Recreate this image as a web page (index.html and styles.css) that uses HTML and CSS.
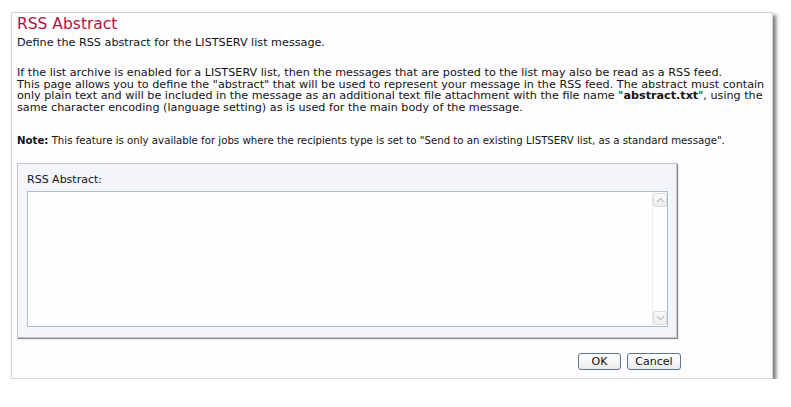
FILE: index.html
```html
<!DOCTYPE html>
<html>
<head>
<meta charset="utf-8">
<link rel="stylesheet" href="styles.css">
</head>
<body>
<div class="card">
  <h1 class="title">RSS Abstract</h1>
  <p class="intro">Define the RSS abstract for the LISTSERV list message.</p>
  <p class="para">If the list archive is enabled for a LISTSERV list, then the messages that are posted to the list may also be read as a RSS feed.<br>This page allows you to define the "abstract" that will be used to represent your message in the RSS feed. The abstract must contain<br>only plain text and will be included in the message as an additional text file attachment with the file name "<b>abstract.txt</b>", using the<br>same character encoding (language setting) as is used for the main body of the message.</p>
  <p class="note"><b>Note:</b> This feature is only available for jobs where the recipients type is set to "Send to an existing LISTSERV list, as a standard message".</p>
  <div class="fieldset">
    <label class="label" for="abs">RSS Abstract:</label>
    <div class="textwrap">
      <textarea id="abs" class="textarea"></textarea>
      <div class="scrollbar">
        <div class="arrow">
          <svg width="9" height="6" viewBox="0 0 9 6"><path d="M1 5 L4.5 1.5 L8 5" fill="none" stroke="#c4c4c4" stroke-width="1.4"/></svg>
        </div>
        <div class="arrow">
          <svg width="9" height="6" viewBox="0 0 9 6"><path d="M1 1 L4.5 4.5 L8 1" fill="none" stroke="#c4c4c4" stroke-width="1.4"/></svg>
        </div>
      </div>
    </div>
  </div>
  <div class="actions">
    <button class="btn btn-ok">OK</button>
    <button class="btn btn-cancel">Cancel</button>
  </div>
</div>
</body>
</html>
```
FILE: styles.css
```css
html, body {
  margin: 0;
  padding: 0;
  background: #ffffff;
}
body {
  font-family: "DejaVu Sans", Verdana, sans-serif;
  font-size: 11.2px;
  line-height: 11.7px;
  color: #141414;
  padding: 12px 0 0 11px;
}
.card {
  box-sizing: border-box;
  width: 762px;
  height: 367px;
  background: #fdfcff;
  border: 1px solid #d6d6d8;
  box-shadow: 3px 3px 4px rgba(0, 0, 0, 0.55);
  padding: 2px 4px 0 5px;
}
.title {
  margin: 0;
  font-size: 15.5px;
  line-height: 18px;
  font-weight: normal;
  color: #b0143c;
}
.intro {
  margin: 4px 0 0 0;
  white-space: nowrap;
}
.para {
  margin: 18.3px 0 0 0;
  white-space: nowrap;
}
.note {
  margin: 21px 0 0 0;
  white-space: nowrap;
  font-size: 10.2px;
}
.fieldset {
  box-sizing: border-box;
  width: 660px;
  height: 175px;
  margin-top: 16px;
  background: #f4f4fb;
  border: 1px solid #c4c4c8;
  box-shadow: 1px 1px 1px rgba(0, 0, 0, 0.45);
  padding: 10.5px 8px 0 9px;
  display: flex;
  flex-direction: column;
}
.label {
  display: block;
  height: 11.7px;
  font-size: 11px;
}
.textwrap {
  margin-top: 5px;
  box-sizing: border-box;
  height: 136px;
  border: 1px solid #a9bcd3;
  background: #fefdff;
  display: flex;
}
.textarea {
  flex: 1;
  border: 0;
  margin: 0;
  padding: 2px;
  resize: none;
  background: transparent;
  outline: none;
  font-family: "DejaVu Sans", Verdana, sans-serif;
  font-size: 11px;
}
.scrollbar {
  width: 14px;
  border-left: 1px solid #ececf0;
  display: flex;
  flex-direction: column;
  justify-content: space-between;
  padding: 1px 0 1px 0;
}
.arrow {
  box-sizing: border-box;
  width: 14px;
  height: 14px;
  border: 1px solid #dcdcdc;
  border-radius: 2px;
  background: linear-gradient(#fafafa, #ededed);
  display: flex;
  align-items: center;
  justify-content: center;
}
.actions {
  width: 664px;
  margin-top: 15px;
  display: flex;
  justify-content: flex-end;
  gap: 6px;
}
.btn {
  box-sizing: border-box;
  height: 17px;
  padding: 0;
  border: 1px solid #5f7290;
  border-radius: 3px;
  background: linear-gradient(#ffffff, #ececf0);
  font-family: "DejaVu Sans", Verdana, sans-serif;
  font-size: 11px;
  line-height: 15px;
  color: #111;
}
.btn-ok {
  width: 43px;
}
.btn-cancel {
  width: 54px;
}
```
